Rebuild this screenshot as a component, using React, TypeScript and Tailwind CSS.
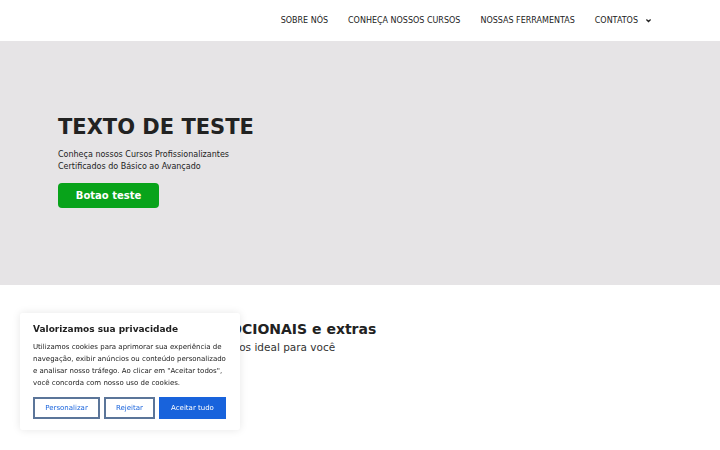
const font = "font-['DejaVu_Sans',sans-serif]"

function Chevron() {
  return (
    <svg width="7" height="7" viewBox="0 0 10 10" className="ml-[7px]">
      <path d="M2 3.5 L5 6.5 L8 3.5" fill="none" stroke="#222" strokeWidth="1.8" />
    </svg>
  )
}

function Header() {
  const items = ['SOBRE NÓS', 'CONHEÇA NOSSOS CURSOS', 'NOSSAS FERRAMENTAS']
  return (
    <header className="h-[41px] bg-white flex items-center justify-end pr-[68px]">
      <nav className="flex items-center gap-5 text-[8px] text-[#222]">
        {items.map(item => (
          <a key={item} className="leading-none">{item}</a>
        ))}
        <a className="flex items-center leading-none">
          CONTATOS
          <Chevron />
        </a>
      </nav>
    </header>
  )
}

function Hero() {
  return (
    <section className="h-[244px] bg-[#e6e4e6] pl-[58px] pt-[74px]">
      <h1 className="text-[21px] leading-[25px] font-bold text-[#222]">TEXTO DE TESTE</h1>
      <p className="mt-[9px] text-[8px] leading-[12px] text-[#222]">
        Conheça nossos Cursos Profissionalizantes
        <br />
        Certificados do Básico ao Avançado
      </p>
      <button className="mt-[10px] w-[101px] h-[25px] rounded-[4px] bg-[#08a31a] text-white text-[10px] font-bold">
        Botao teste
      </button>
    </section>
  )
}

function Courses() {
  return (
    <section className="bg-white pl-[66px] pt-[36px] h-[165px]">
      <h2 className="text-[14px] leading-[17px] font-bold text-[#222]">Nossos cursos PROMOCIONAIS e extras</h2>
      <p className="mt-[2px] text-[10.5px] leading-[14px] text-[#333]">
        Encontre entre os nossos cursos os ideal para você
      </p>
    </section>
  )
}

function CookieBanner() {
  return (
    <div className="fixed left-[20px] bottom-[20px] w-[220px] bg-white rounded-[3px] shadow-[0_0_8px_rgba(0,0,0,0.1)] px-[13px] pt-[9px] pb-[11px]">
      <p className="text-[9px] leading-[14px] font-bold text-[#212121]">Valorizamos sua privacidade</p>
      <p className="mt-[5px] text-[7px] leading-[12px] text-[#212121]">
        Utilizamos cookies para aprimorar sua experiência de navegação, exibir anúncios ou conteúdo personalizado
        e analisar nosso tráfego. Ao clicar em "Aceitar todos", você concorda com nosso uso de cookies.
      </p>
      <div className="mt-[8px] flex gap-[4px]">
        <button className="w-[67px] h-[22px] border-2 border-[#5b7599] text-[#1863dc] text-[7px]">Personalizar</button>
        <button className="w-[51px] h-[22px] border-2 border-[#5b7599] text-[#1863dc] text-[7px]">Rejeitar</button>
        <button className="w-[67px] h-[22px] bg-[#1863dc] text-white text-[7px]">Aceitar tudo</button>
      </div>
    </div>
  )
}

export default function App() {
  return (
    <div className={`${font} min-h-[450px] bg-white`}>
      <Header />
      <Hero />
      <Courses />
      <CookieBanner />
    </div>
  )
}
